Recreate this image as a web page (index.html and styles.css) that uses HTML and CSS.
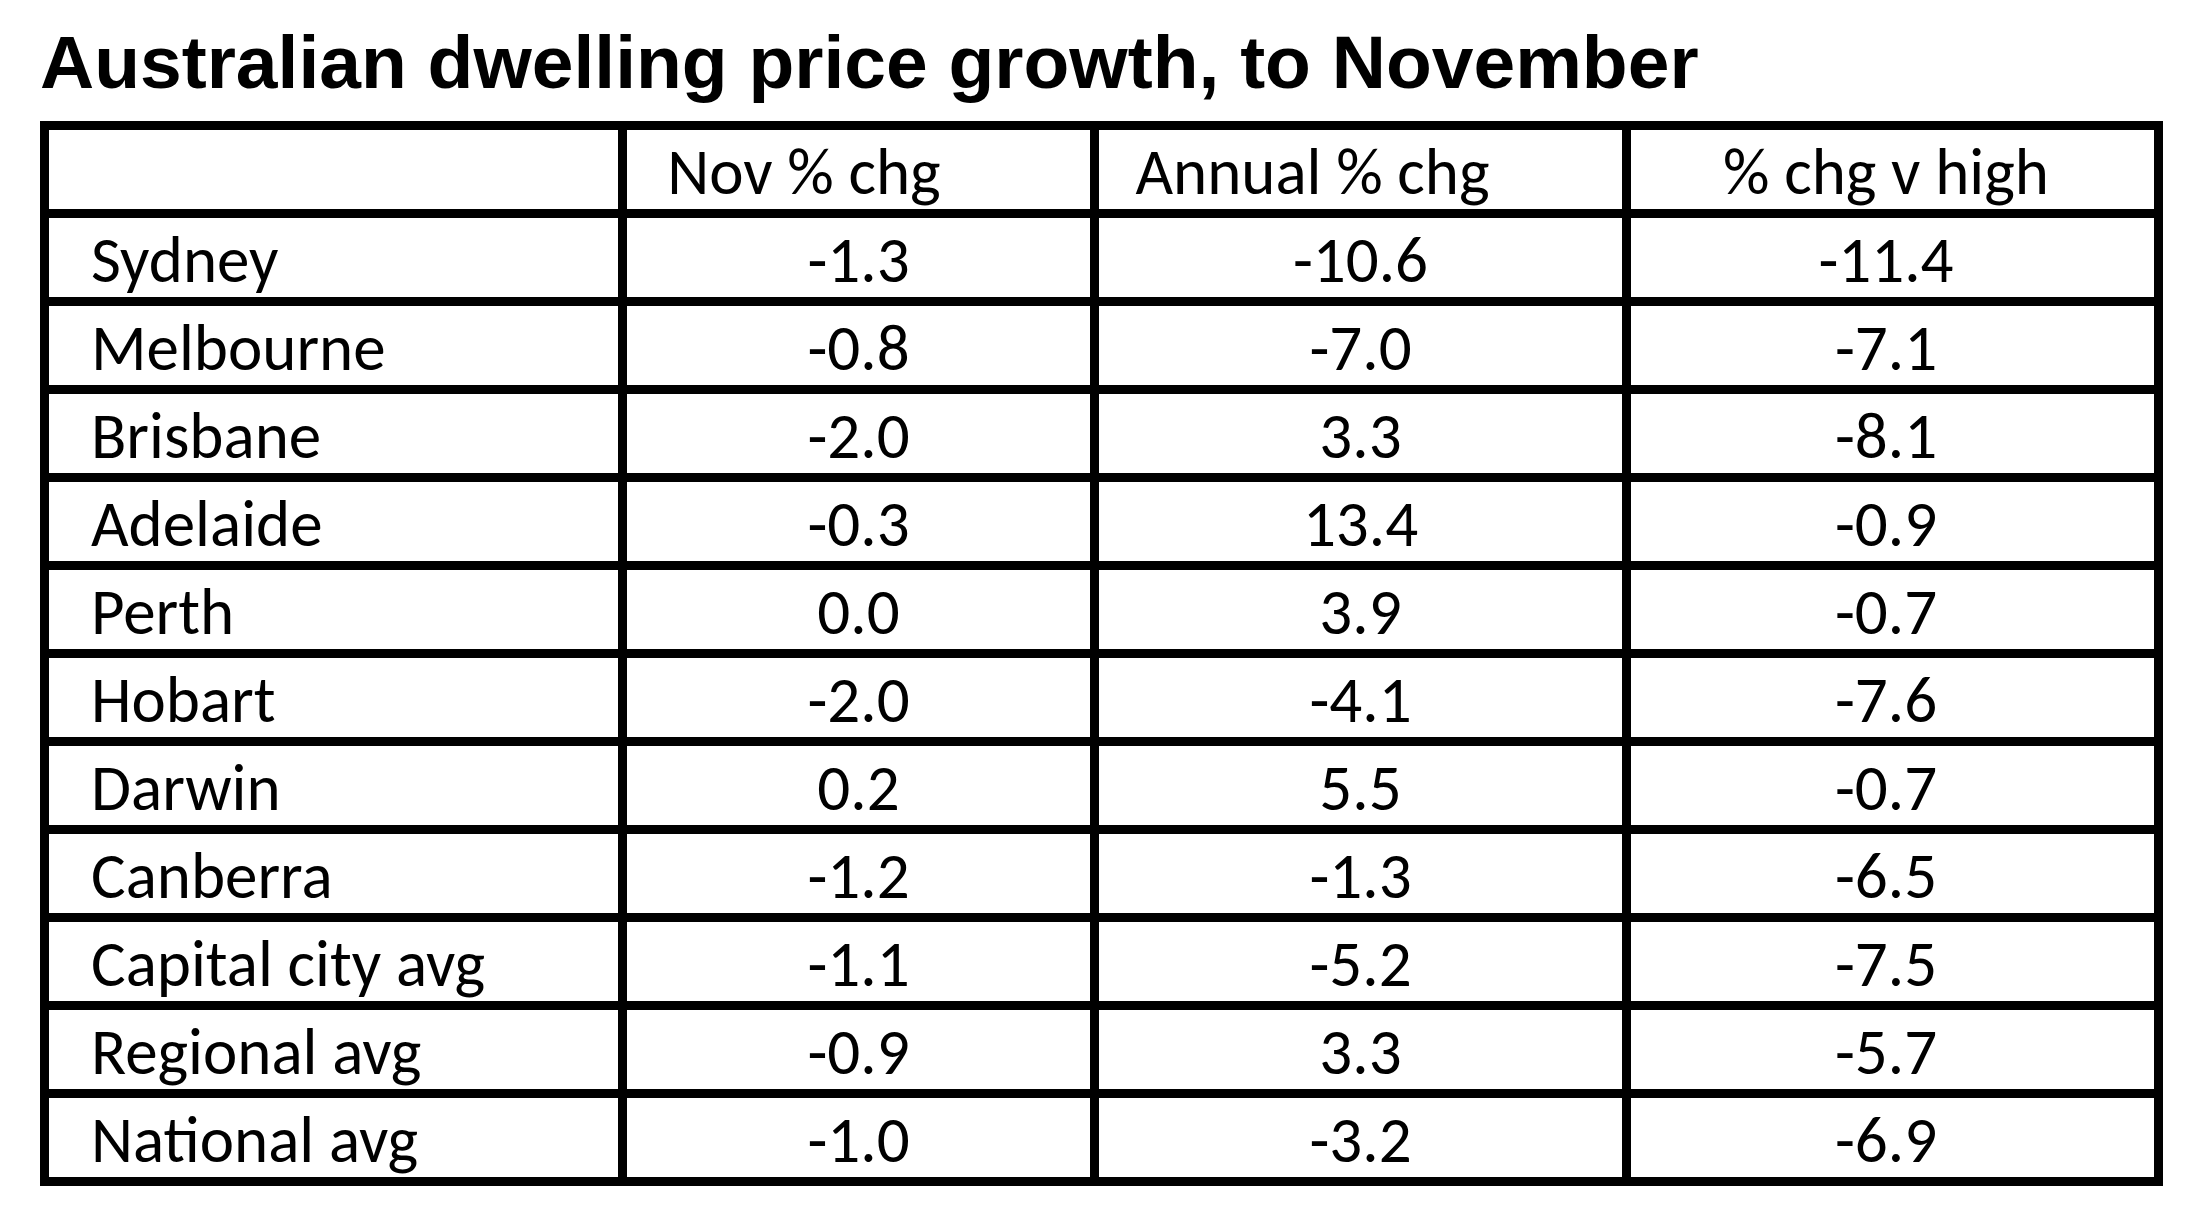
FILE: index.html
```html
<!DOCTYPE html>
<html lang="en">
<head>
<meta charset="utf-8">
<title>Australian dwelling price growth, to November</title>
<link rel="stylesheet" href="styles.css">
</head>
<body>
<main class="page">
  <h1 class="title">Australian dwelling price growth, to November</h1>
  <div class="grid">
    <div class="cell head name"></div>
    <div class="cell head c2">Nov % chg</div>
    <div class="cell head c3">Annual % chg</div>
    <div class="cell head c4">% chg v high</div>

    <div class="cell name">Sydney</div><div class="cell num">-1.3</div><div class="cell num">-10.6</div><div class="cell num c4">-11.4</div>
    <div class="cell name">Melbourne</div><div class="cell num">-0.8</div><div class="cell num">-7.0</div><div class="cell num c4">-7.1</div>
    <div class="cell name">Brisbane</div><div class="cell num">-2.0</div><div class="cell num">3.3</div><div class="cell num c4">-8.1</div>
    <div class="cell name">Adelaide</div><div class="cell num">-0.3</div><div class="cell num">13.4</div><div class="cell num c4">-0.9</div>
    <div class="cell name">Perth</div><div class="cell num">0.0</div><div class="cell num">3.9</div><div class="cell num c4">-0.7</div>
    <div class="cell name">Hobart</div><div class="cell num">-2.0</div><div class="cell num">-4.1</div><div class="cell num c4">-7.6</div>
    <div class="cell name">Darwin</div><div class="cell num">0.2</div><div class="cell num">5.5</div><div class="cell num c4">-0.7</div>
    <div class="cell name">Canberra</div><div class="cell num">-1.2</div><div class="cell num">-1.3</div><div class="cell num c4">-6.5</div>
    <div class="cell name">Capital city avg</div><div class="cell num">-1.1</div><div class="cell num">-5.2</div><div class="cell num c4">-7.5</div>
    <div class="cell name">Regional avg</div><div class="cell num">-0.9</div><div class="cell num">3.3</div><div class="cell num c4">-5.7</div>
    <div class="cell name">National avg</div><div class="cell num">-1.0</div><div class="cell num">-3.2</div><div class="cell num c4">-6.9</div>
  </div>
</main>
</body>
</html>
```
FILE: styles.css
```css
html, body {
  margin: 0;
  padding: 0;
  background: #ffffff;
}

.page {
  padding: 19px 0 0 40px;
}

.title {
  margin: 0 0 16px 0;
  font-family: "Liberation Sans", Arial, sans-serif;
  font-weight: 700;
  font-size: 75px;
  line-height: 86px;
  color: #000;
  white-space: nowrap;
}

.grid {
  display: grid;
  width: max-content;
  grid-template-columns: 569px 463px 523px 523px;
  grid-auto-rows: 79px;
  gap: 9px;
  padding: 9px;
  background: #000;
}

.cell {
  background: #fff;
  color: #000;
  font-family: Carlito, Calibri, Lato, sans-serif;
  font-size: 66px;
  font-size-adjust: cap-height 0.632;
  line-height: 75px;
  padding-top: 4px;
  box-sizing: border-box;
  white-space: nowrap;
}

.name {
  padding-left: 42px;
}

.num,
.head {
  text-align: center;
}

.head.c2 {
  padding-right: 109px;
}

.head.c3 {
  padding-right: 96px;
}

.c4 {
  padding-right: 13px;
}
```
